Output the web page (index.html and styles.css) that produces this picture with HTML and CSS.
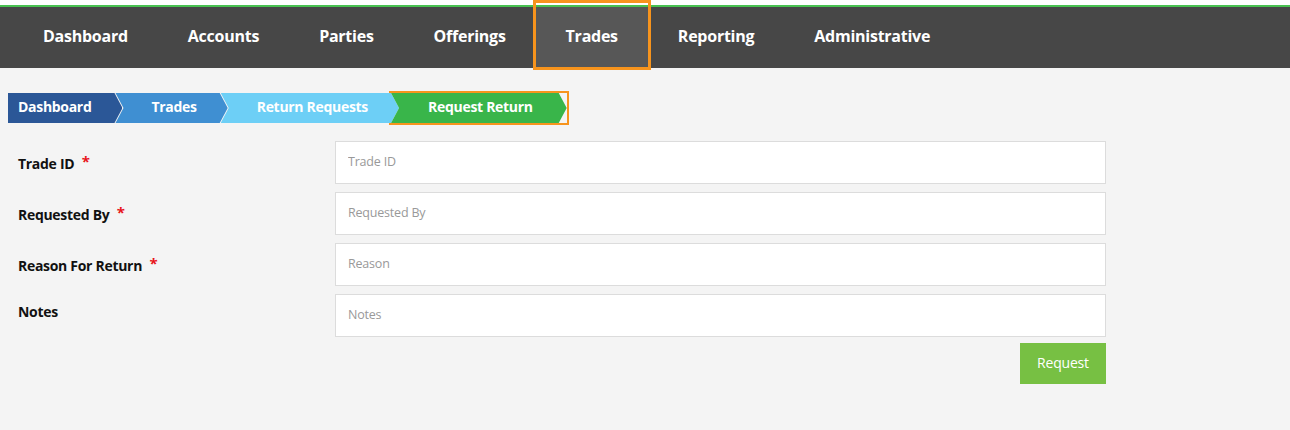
FILE: index.html
```html
<!DOCTYPE html>
<html>
<head>
<meta charset="utf-8">
<link rel="stylesheet" href="styles.css">
</head>
<body>
<div class="topstrip"></div>
<nav class="nav">
  <a class="nav-item">Dashboard</a>
  <a class="nav-item">Accounts</a>
  <a class="nav-item">Parties</a>
  <a class="nav-item">Offerings</a>
  <a class="nav-item active">Trades</a>
  <a class="nav-item">Reporting</a>
  <a class="nav-item">Administrative</a>
</nav>
<div class="crumbs">
  <span class="crumb c1">Dashboard</span>
  <span class="crumb c2">Trades</span>
  <span class="crumb c3">Return Requests</span>
  <span class="crumb-wrap"><span class="crumb c4">Request Return</span></span>
</div>
<form class="form">
  <label class="label">Trade ID <span class="req">*</span></label>
  <input class="input" placeholder="Trade ID">
  <label class="label">Requested By <span class="req">*</span></label>
  <input class="input" placeholder="Requested By">
  <label class="label">Reason For Return <span class="req">*</span></label>
  <input class="input" placeholder="Reason">
  <label class="label">Notes</label>
  <input class="input" placeholder="Notes">
  <div></div>
  <div class="actions"><button type="button" class="btn">Request</button></div>
</form>
</body>
</html>
```
FILE: styles.css
```css
* { box-sizing: border-box; }
html, body { margin: 0; padding: 0; }
body {
  background: #f4f4f4;
  font-family: "Open Sans", "Liberation Sans", sans-serif;
  width: 1290px;
  height: 430px;
  overflow: hidden;
}
.topstrip {
  height: 7px;
  background: #fff;
  border-bottom: 2px solid #48c151;
}
.nav {
  display: flex;
  height: 61px;
  background: #474747;
  padding-left: 13px;
}
.nav-item {
  position: relative;
  display: flex;
  align-items: center;
  padding: 0 30px 4px;
  color: #fff;
  font-weight: 700;
  font-size: 16px;
  letter-spacing: -0.25px;
}
.nav-item.active { background: #575757; }
.nav-item.active::after {
  content: "";
  position: absolute;
  left: -3px; right: -3px; top: -7px; bottom: -2px;
  border: 3px solid #f7941d;
}
.crumbs {
  display: flex;
  margin: 25px 0 0 8px;
  height: 30px;
}
.crumb {
  display: flex;
  align-items: center;
  height: 30px;
  color: #fff;
  font-weight: 700;
  font-size: 14px;
  letter-spacing: -0.3px;
  padding: 0 31px 3px 36px;
  margin-left: -7px;
  clip-path: polygon(0 0, calc(100% - 8px) 0, 100% 50%, calc(100% - 8px) 100%, 0 100%, 8px 50%);
}
.c1 {
  background: #2b5797;
  padding-left: 10px;
  margin-left: 0;
  clip-path: polygon(0 0, calc(100% - 8px) 0, 100% 50%, calc(100% - 8px) 100%, 0 100%);
}
.c2 { background: #3f8fd2; }
.c3 { background: #6dcff6; }
.c4 { background: #39b54a; margin-left: 0; padding: 0 34px 3px 37px; }
.crumb-wrap {
  display: flex;
  margin: -2px 0 0 -10px;
  height: 34px;
  border: 2px solid #f7941d;
}
.form {
  display: grid;
  grid-template-columns: 317px 771px;
  row-gap: 8px;
  padding-left: 18px;
  margin-top: 18px;
}
.label {
  display: block;
  padding-top: 9px;
  line-height: 18px;
  font-weight: 700;
  font-size: 14px;
  letter-spacing: -0.3px;
  color: #111;
}
.req {
  position: relative;
  top: 4px;
  color: #e8141b;
  font-size: 15px;
  margin-left: 4px;
  vertical-align: 6px;
  line-height: 1;
}
.input {
  height: 43px;
  border: 1.5px solid #dcdcdc;
  background: #fff;
  padding: 0 12px 2px;
  font-family: inherit;
  font-size: 12.5px;
  letter-spacing: -0.2px;
  color: #333;
  outline: none;
}
.input::placeholder { color: #999; }
.actions {
  display: flex;
  justify-content: flex-end;
  margin-top: -2px;
}
.btn {
  width: 86px;
  height: 41px;
  border: none;
  background: #77c043;
  color: #fff;
  font-family: inherit;
  font-size: 14px;
  letter-spacing: -0.2px;
  padding: 0 0 2px;
}
```
